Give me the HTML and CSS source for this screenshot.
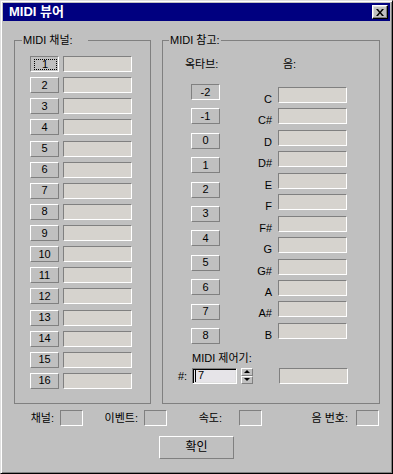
FILE: index.html
```html
<!DOCTYPE html>
<html lang="ko">

<head>
  <meta charset="UTF-8">
  <meta name="viewport" content="width=device-width, initial-scale=1.0">
  <title>MIDI 뷰어</title>
  <link rel="stylesheet" href="styles.css">
</head>

<body>
  <div class="window">
    <div class="titlebar">
      <h1>MIDI 뷰어</h1>
      <button class="close-btn" aria-label="닫기">
        <svg width="8" height="7" viewBox="0 0 8 7">
          <path d="M0 0h2l2 2.4L6 0h2L5 3.5 8 7H6L4 4.6 2 7H0l3-3.5z" fill="#000" />
        </svg>
      </button>
    </div>

    <div class="groups">
      <fieldset class="group group-channels">
        <legend class="legend-wide">MIDI 채널:</legend>
        <div class="channels">
          <div class="row"><button class="btn pressed"><span class="focus">1</span></button><div class="field"></div></div>
          <div class="row"><button class="btn">2</button><div class="field"></div></div>
          <div class="row"><button class="btn">3</button><div class="field"></div></div>
          <div class="row"><button class="btn">4</button><div class="field"></div></div>
          <div class="row"><button class="btn">5</button><div class="field"></div></div>
          <div class="row"><button class="btn">6</button><div class="field"></div></div>
          <div class="row"><button class="btn">7</button><div class="field"></div></div>
          <div class="row"><button class="btn">8</button><div class="field"></div></div>
          <div class="row"><button class="btn">9</button><div class="field"></div></div>
          <div class="row"><button class="btn">10</button><div class="field"></div></div>
          <div class="row"><button class="btn">11</button><div class="field"></div></div>
          <div class="row"><button class="btn">12</button><div class="field"></div></div>
          <div class="row"><button class="btn">13</button><div class="field"></div></div>
          <div class="row"><button class="btn">14</button><div class="field"></div></div>
          <div class="row"><button class="btn">15</button><div class="field"></div></div>
          <div class="row"><button class="btn">16</button><div class="field"></div></div>
        </div>
      </fieldset>

      <fieldset class="group group-ref">
        <legend>MIDI 참고:</legend>
        <div class="ref-body">
          <div class="ref-cols">
            <div class="octaves">
              <div class="col-head">옥타브:</div>
              <div class="oct-list">
                <button class="btn pressed">-2</button>
                <button class="btn">-1</button>
                <button class="btn">0</button>
                <button class="btn">1</button>
                <button class="btn">2</button>
                <button class="btn">3</button>
                <button class="btn">4</button>
                <button class="btn">5</button>
                <button class="btn">6</button>
                <button class="btn">7</button>
                <button class="btn">8</button>
              </div>
            </div>
            <div class="notes">
              <div class="col-head">음:</div>
              <div class="note-list">
                <div class="note-row"><span class="note-name">C</span><div class="field"></div></div>
                <div class="note-row"><span class="note-name">C#</span><div class="field"></div></div>
                <div class="note-row"><span class="note-name">D</span><div class="field"></div></div>
                <div class="note-row"><span class="note-name">D#</span><div class="field"></div></div>
                <div class="note-row"><span class="note-name">E</span><div class="field"></div></div>
                <div class="note-row"><span class="note-name">F</span><div class="field"></div></div>
                <div class="note-row"><span class="note-name">F#</span><div class="field"></div></div>
                <div class="note-row"><span class="note-name">G</span><div class="field"></div></div>
                <div class="note-row"><span class="note-name">G#</span><div class="field"></div></div>
                <div class="note-row"><span class="note-name">A</span><div class="field"></div></div>
                <div class="note-row"><span class="note-name">A#</span><div class="field"></div></div>
                <div class="note-row"><span class="note-name">B</span><div class="field"></div></div>
              </div>
            </div>
          </div>

          <div class="ctrl-label">MIDI 제어기:</div>
          <div class="ctrl-row">
            <span class="hash">#:</span>
            <div class="edit"><span class="caret"></span>7</div>
            <div class="spin">
              <button class="spin-btn"><span class="arrow-up"></span></button>
              <button class="spin-btn"><span class="arrow-down"></span></button>
            </div>
            <div class="field ctrl-field"></div>
          </div>
        </div>
      </fieldset>
    </div>

    <div class="status">
      <div class="stat stat-channel"><span class="stat-label">채널:</span><div class="stat-box"></div></div>
      <div class="stat stat-event"><span class="stat-label">이벤트:</span><div class="stat-box"></div></div>
      <div class="stat stat-velocity"><span class="stat-label">속도:</span><div class="stat-box"></div></div>
      <div class="stat stat-note"><span class="stat-label">음 번호:</span><div class="stat-box"></div></div>
    </div>

    <div class="actions">
      <button class="ok-btn">확인</button>
    </div>
  </div>
</body>

</html>
```

FILE: styles.css
```css
*,
*::before,
*::after {
  box-sizing: border-box;
}

:root {
  --face: #c0c0c0;
  --shadow: #808080;
  --light: #dfdfdf;
  --field: #d6d3ce;
  --edit: #e6e4e8;
  --navy: #000080;
}

html,
body {
  margin: 0;
  padding: 0;
  background: var(--face);
}

body {
  font-family: "Liberation Sans", "Noto Sans CJK KR", sans-serif;
  font-size: 11px;
  line-height: 13px;
  color: #000;
}

button {
  font: inherit;
  color: #000;
  padding: 0;
  cursor: pointer;
}

.window {
  width: 393px;
  height: 474px;
  display: flex;
  flex-direction: column;
  padding: 2px;
  background: var(--face);
  border: 1px solid;
  border-color: var(--light) #000 #000 var(--light);
  box-shadow: inset 1px 1px #fff, inset -1px -1px var(--shadow);
}

/* title bar */
.titlebar {
  height: 18px;
  flex-shrink: 0;
  display: flex;
  align-items: center;
  justify-content: space-between;
  padding: 0 2px 0 6px;
  background: var(--navy);
  color: #fff;
}

.titlebar h1 {
  margin: 0;
  font-size: 13px;
  font-weight: bold;
  line-height: 16px;
}

.close-btn {
  width: 16px;
  height: 14px;
  display: flex;
  align-items: center;
  justify-content: center;
  background: var(--face);
  border: 1px solid;
  border-color: #fff #000 #000 #fff;
  box-shadow: inset -1px -1px var(--shadow), inset 1px 1px var(--light);
}

/* group boxes */
.groups {
  display: flex;
  gap: 11px;
  padding: 13px 0 0 11px;
}

.group {
  margin: 0;
  padding: 0;
  height: 370px;
  border: 1px solid var(--shadow);
}

.group legend {
  padding: 0 1px;
  line-height: 13px;
}

.group-channels {
  width: 137px;
}

.group-channels legend {
  margin-left: 7px;
}

.legend-wide {
  padding-right: 15px !important;
}

.group-ref {
  width: 218px;
}

.group-ref legend {
  margin-left: 6px;
}

/* shared controls */
.btn {
  width: 29px;
  height: 16px;
  display: flex;
  align-items: center;
  justify-content: center;
  background: var(--face);
  border: 1px solid;
  border-color: #fff var(--shadow) var(--shadow) #fff;
}

.btn.pressed {
  border-color: var(--shadow) #fff #fff var(--shadow);
}

.btn .focus {
  display: block;
  width: 23px;
  height: 11px;
  margin: 0 0 0 1px;
  line-height: 9px;
  border: 1px dotted #000;
}

.field {
  width: 69px;
  height: 16px;
  background: var(--field);
  border: 1px solid;
  border-color: var(--shadow) #fff #fff var(--shadow);
}

/* MIDI channels */
.channels {
  display: flex;
  flex-direction: column;
  gap: 5.13px;
  padding: 9px 0 0 15px;
}

.row {
  display: flex;
  gap: 4px;
}

/* MIDI reference */
.ref-body {
  padding: 11px 0 0 15px;
}

.ref-cols {
  display: flex;
}

.octaves {
  width: 36px;
  margin-left: 7px;
}

.octaves .col-head {
  margin-bottom: 13px;
}

.oct-list {
  display: flex;
  flex-direction: column;
  gap: 8.4px;
  padding-left: 6px;
}

.notes {
  margin-left: 29px;
}

.notes .col-head {
  padding-left: 33px;
  margin-bottom: 16px;
}

.note-list {
  display: flex;
  flex-direction: column;
  gap: 5.45px;
}

.note-row {
  display: flex;
  align-items: flex-end;
  gap: 6px;
}

.note-name {
  width: 22px;
  text-align: right;
  margin-bottom: -3px;
}

.ctrl-label {
  margin: 8px 0 0 14px;
}

.ctrl-row {
  display: flex;
  align-items: center;
  margin-top: 3px;
}

.hash {
  width: 14px;
  padding-top: 2px;
}

.edit {
  width: 45px;
  height: 16px;
  display: flex;
  align-items: center;
  padding-left: 2px;
  background: var(--edit);
  border: 1px solid;
  border-color: var(--shadow) #fff #fff var(--shadow);
  box-shadow: inset 1px 1px #000, inset -1px -1px var(--light);
}

.caret {
  width: 1px;
  height: 12px;
  margin-right: 2px;
  background: #000;
}

.spin {
  width: 12px;
  height: 16px;
  display: flex;
  flex-direction: column;
  margin-left: 4px;
}

.spin-btn {
  height: 8px;
  display: flex;
  align-items: center;
  justify-content: center;
  background: var(--face);
  border: 1px solid;
  border-color: #fff var(--shadow) var(--shadow) #fff;
}

.arrow-up,
.arrow-down {
  width: 0;
  height: 0;
  border-left: 3px solid transparent;
  border-right: 3px solid transparent;
}

.arrow-up {
  border-bottom: 3px solid #000;
}

.arrow-down {
  border-top: 3px solid #000;
}

.ctrl-field {
  margin-left: 26px;
}

/* status line */
.status {
  display: flex;
  align-items: center;
  margin-top: 6px;
  padding-left: 11px;
}

.stat {
  display: flex;
  align-items: center;
  gap: 6px;
}

.stat-label {
  text-align: right;
}

.stat-channel .stat-label {
  width: 40px;
}

.stat-event .stat-label {
  width: 55px;
}

.stat-velocity .stat-label {
  width: 66px;
  padding-right: 11px;
}

.stat-note .stat-label {
  width: 88px;
  padding-right: 2px;
}

.stat-box {
  width: 23px;
  height: 16px;
  border: 1px solid;
  border-color: var(--shadow) #fff #fff var(--shadow);
}

.actions {
  display: flex;
  justify-content: center;
  margin-top: 10px;
}

.ok-btn {
  width: 75px;
  height: 23px;
  font-size: 12px;
  background: var(--face);
  border: 1px solid;
  border-color: #fff var(--shadow) var(--shadow) #fff;
}
```
